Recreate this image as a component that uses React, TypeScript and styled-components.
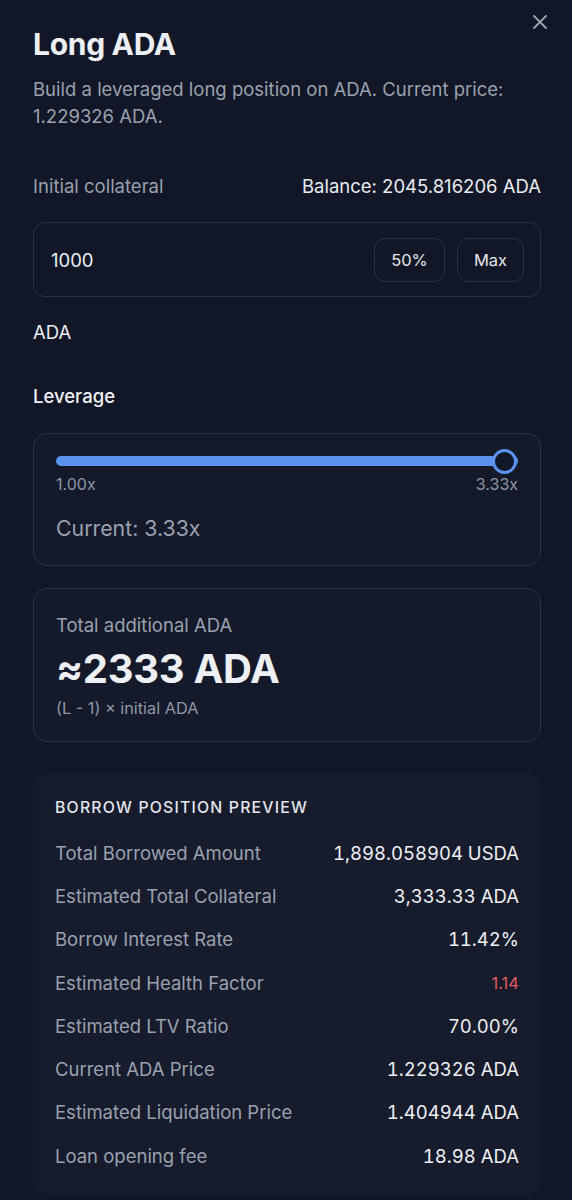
import React from "react";
import styled, { createGlobalStyle } from "styled-components";

const Global = createGlobalStyle`
  html, body { margin: 0; padding: 0; background: #111726; }
  body { font-family: Inter, "Noto Sans", sans-serif; -webkit-font-smoothing: antialiased; }
  * { box-sizing: border-box; }
`;

const Page = styled.div`
  width: 572px;
  min-height: 1200px;
  background: #111726;
  padding: 26px 31px 0 33px;
  position: relative;
  color: #e5e7eb;
`;

const Close = styled.button`
  position: absolute;
  top: 12px;
  right: 22px;
  width: 20px;
  height: 20px;
  padding: 0;
  border: none;
  background: none;
  color: #9ca3af;
  display: flex;
  align-items: center;
  justify-content: center;
`;

const Title = styled.h1`
  margin: 0;
  font-size: 30px;
  line-height: 36px;
  font-weight: 700;
  color: #eef0f6;
  letter-spacing: -0.3px;
`;

const Desc = styled.p`
  margin: 14px 0 0;
  font-size: 18.5px;
  line-height: 27px;
  color: #9aa1ae;
`;

const LabelRow = styled.div`
  margin-top: 43px;
  display: flex;
  justify-content: space-between;
  align-items: center;
  font-size: 18.5px;
  line-height: 26px;
`;

const Muted = styled.span`
  color: #9aa1ae;
`;

const Bright = styled.span`
  color: #e9ebf0;
`;

const InputBox = styled.div`
  margin-top: 23px;
  height: 75px;
  border: 1px solid #2b3344;
  border-radius: 12px;
  display: flex;
  align-items: center;
  padding: 0 16px 0 17px;
  gap: 12px;
`;

const Amount = styled.div`
  flex: 1;
  font-size: 18.5px;
  color: #eef0f4;
`;

const Pill = styled.button<{ $w: number }>`
  width: ${(p) => p.$w}px;
  height: 44px;
  border: 1px solid #2b3344;
  border-radius: 11px;
  background: transparent;
  color: #e5e7eb;
  font-family: inherit;
  font-size: 16.5px;
`;

const Unit = styled.div`
  margin-top: 22px;
  font-size: 18.5px;
  line-height: 26px;
  color: #e9ebf0;
`;

const SectionLabel = styled.div`
  margin-top: 38px;
  font-size: 18.5px;
  line-height: 26px;
  font-weight: 500;
  color: #f0f2f6;
`;

const Card = styled.div<{ $pt: number; $h: number; $mt: number }>`
  margin-top: ${(p) => p.$mt}px;
  height: ${(p) => p.$h}px;
  border: 1px solid #2b3344;
  border-radius: 14px;
  background: #141a2a;
  padding: ${(p) => p.$pt}px 22px 0 22px;
`;

const Track = styled.div`
  position: relative;
  height: 10px;
  border-radius: 5px;
  background: #5b93ef;
`;

const Thumb = styled.div`
  position: absolute;
  right: 1px;
  top: 50%;
  width: 25px;
  height: 25px;
  margin-top: -12.5px;
  border-radius: 50%;
  border: 3px solid #5b93ef;
  background: #111726;
`;

const Ticks = styled.div`
  margin-top: 9px;
  display: flex;
  justify-content: space-between;
  font-size: 16px;
  line-height: 18px;
  color: #8f97a5;
`;

const Current = styled.div`
  margin-top: 22px;
  font-size: 21.3px;
  line-height: 26px;
  color: #9aa1ae;
`;

const CardLabel = styled.div`
  font-size: 18.5px;
  line-height: 24px;
  color: #9aa1ae;
`;

const Big = styled.div`
  margin-top: 8px;
  font-size: 40px;
  line-height: 48px;
  font-weight: 700;
  color: #eef0f6;
  letter-spacing: -0.3px;
`;

const Formula = styled.div`
  margin-top: 5px;
  font-size: 16.3px;
  line-height: 20px;
  color: #8f97a5;
`;

const Preview = styled.div`
  margin-top: 32px;
  border-radius: 14px;
  background: #161c2c;
  padding: 24px 22px 17px 22px;
`;

const PreviewTitle = styled.div`
  font-size: 15.8px;
  line-height: 20px;
  letter-spacing: 1.2px;
  font-weight: 500;
  color: #e3e6ec;
  margin-bottom: 13px;
`;

const Row = styled.div`
  display: flex;
  justify-content: space-between;
  align-items: center;
  height: 43.3px;
  font-size: 18.5px;
`;

const Value = styled.span<{ $danger?: boolean }>`
  color: ${(p) => (p.$danger ? "#e05a5f" : "#eef0f4")};
  font-size: ${(p) => (p.$danger ? "16.5px" : "18.5px")};
  font-variant-numeric: ${(p) => (p.$danger ? "normal" : "tabular-nums")};
`;

const rows: [string, string, boolean?][] = [
  ["Total Borrowed Amount", "1,898.058904 USDA"],
  ["Estimated Total Collateral", "3,333.33 ADA"],
  ["Borrow Interest Rate", "11.42%"],
  ["Estimated Health Factor", "1.14", true],
  ["Estimated LTV Ratio", "70.00%"],
  ["Current ADA Price", "1.229326 ADA"],
  ["Estimated Liquidation Price", "1.404944 ADA"],
  ["Loan opening fee", "18.98 ADA"],
];

export default function App() {
  return (
    <>
      <Global />
      <Page>
        <Close aria-label="Close">
          <svg width="14" height="14" viewBox="0 0 14 14" fill="none">
            <path d="M1 1L13 13M13 1L1 13" stroke="currentColor" strokeWidth="1.8" strokeLinecap="round" />
          </svg>
        </Close>
        <Title>Long ADA</Title>
        <Desc>Build a leveraged long position on ADA. Current price: 1.229326 ADA.</Desc>
        <LabelRow>
          <Muted>Initial collateral</Muted>
          <Bright>Balance: 2045.816206 ADA</Bright>
        </LabelRow>
        <InputBox>
          <Amount>1000</Amount>
          <Pill $w={71}>50%</Pill>
          <Pill $w={67}>Max</Pill>
        </InputBox>
        <Unit>ADA</Unit>
        <SectionLabel>Leverage</SectionLabel>
        <Card $pt={22} $h={133} $mt={24}>
          <Track>
            <Thumb />
          </Track>
          <Ticks>
            <span>1.00x</span>
            <span>3.33x</span>
          </Ticks>
          <Current>Current: 3.33x</Current>
        </Card>
        <Card $pt={24} $h={154} $mt={22}>
          <CardLabel>Total additional ADA</CardLabel>
          <Big>≈2333 ADA</Big>
          <Formula>(L - 1) × initial ADA</Formula>
        </Card>
        <Preview>
          <PreviewTitle>BORROW POSITION PREVIEW</PreviewTitle>
          {rows.map(([l, v, d]) => (
            <Row key={l}>
              <Muted>{l}</Muted>
              <Value $danger={d}>{v}</Value>
            </Row>
          ))}
        </Preview>
      </Page>
    </>
  );
}
